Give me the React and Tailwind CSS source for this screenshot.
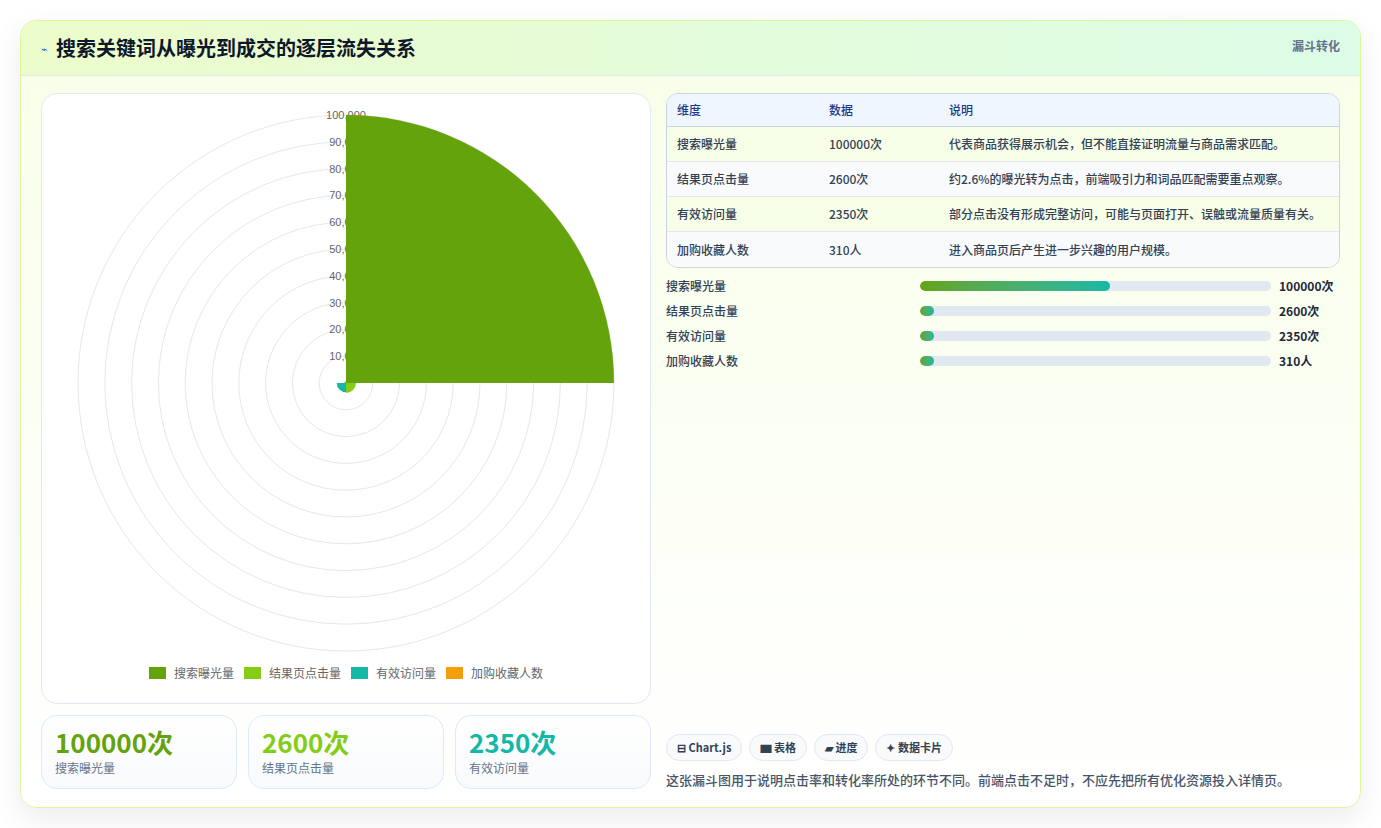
const font = { fontFamily: '"Noto Sans CJK SC", "Noto Sans", sans-serif' };

const rows = [
  { name: '搜索曝光量', value: '100000次', desc: '代表商品获得展示机会，但不能直接证明流量与商品需求匹配。', pct: 54, bg: 'bg-[#f7fee7]' },
  { name: '结果页点击量', value: '2600次', desc: '约2.6%的曝光转为点击，前端吸引力和词品匹配需要重点观察。', pct: 4, bg: 'bg-[#f8fafc]' },
  { name: '有效访问量', value: '2350次', desc: '部分点击没有形成完整访问，可能与页面打开、误触或流量质量有关。', pct: 4, bg: 'bg-[#f7fee7]' },
  { name: '加购收藏人数', value: '310人', desc: '进入商品页后产生进一步兴趣的用户规模。', pct: 4, bg: 'bg-[#f8fafc]' },
];

function wedge(cx, cy, r, a0, a1) {
  const rad = (a) => ((a - 90) * Math.PI) / 180;
  const x0 = cx + r * Math.cos(rad(a0));
  const y0 = cy + r * Math.sin(rad(a0));
  const x1 = cx + r * Math.cos(rad(a1));
  const y1 = cy + r * Math.sin(rad(a1));
  return `M${cx} ${cy} L${x0} ${y0} A${r} ${r} 0 0 1 ${x1} ${y1} Z`;
}

function PolarChart() {
  const cx = 305, cy = 289, R = 268;
  const s = (v) => (v / 100000) * R;
  return (
    <svg width="610" height="560" className="block">
      {[1, 2, 3, 4, 5, 6, 7, 8, 9, 10].map((k) => (
        <circle key={k} cx={cx} cy={cy} r={k * 26.8} fill="none" stroke="#e5e7eb" strokeWidth="1" />
      ))}
      {[1, 2, 3, 4, 5, 6, 7, 8, 9, 10].map((k) => (
        <text key={k} x={cx} y={cy - k * 26.8 + 4} textAnchor="middle" fontSize="11" fill="#666" fontFamily="Liberation Sans, sans-serif">
          {(k * 10000).toLocaleString('en-US')}
        </text>
      ))}
      <path d={wedge(cx, cy, s(100000), 0, 90)} fill="#65a30d" />
      <path d={wedge(cx, cy, s(2600) + 3, 90, 180)} fill="#84cc16" />
      <path d={wedge(cx, cy, s(2350) + 3, 180, 270)} fill="#14b8a6" />
      <path d={wedge(cx, cy, s(310) + 1, 270, 360)} fill="#f59e0b" />
    </svg>
  );
}

export default function App() {
  return (
    <div className="min-h-screen bg-white p-5 text-[#1e293b]" style={font}>
      <div className="rounded-2xl border border-[#d9f99d] shadow-[0_10px_30px_rgba(0,0,0,0.08)] overflow-hidden bg-gradient-to-b from-[#f7fee7] to-white">
        {/* Header */}
        <div className="h-[55px] flex items-center justify-between px-5 bg-gradient-to-r from-[#ecfccb] to-[#dcfce7] border-b border-[#e2e8f0]">
          <div className="flex items-center gap-2">
            <span className="text-[11px] text-[#2563eb]">⌁</span>
            <h1 className="text-[20px] font-bold text-[#0f172a]">搜索关键词从曝光到成交的逐层流失关系</h1>
          </div>
          <span className="self-start mt-4 text-[12px] font-bold text-[#64748b]">漏斗转化</span>
        </div>

        <div className="flex gap-[15px] px-5 pt-[17px] pb-[18px]">
          {/* Left column */}
          <div className="w-[610px] flex flex-col gap-[11px]">
            <div className="h-[611px] bg-white rounded-2xl border border-[#e2e8f0] flex flex-col items-center">
              <PolarChart />
              <div className="flex items-center gap-[10px] text-[12px] text-[#666] mt-[10px]">
                {[['#65a30d', '搜索曝光量'], ['#84cc16', '结果页点击量'], ['#14b8a6', '有效访问量'], ['#f59e0b', '加购收藏人数']].map(([c, t]) => (
                  <div key={t} className="flex items-center gap-[8px]">
                    <span className="w-[17px] h-[12px]" style={{ backgroundColor: c }} />
                    <span>{t}</span>
                  </div>
                ))}
              </div>
            </div>
            <div className="grid grid-cols-3 gap-[11px]">
              {[['100000次', '搜索曝光量', 'text-[#65a30d]'], ['2600次', '结果页点击量', 'text-[#84cc16]'], ['2350次', '有效访问量', 'text-[#14b8a6]']].map(([v, l, c]) => (
                <div key={l} className="h-[74px] rounded-2xl border border-[#dbeafe] bg-gradient-to-b from-white to-[#f8fafc] px-[13px] pt-[9px]">
                  <div className={`text-[26px] font-bold leading-[34px] ${c}`}>{v}</div>
                  <div className="text-[12px] text-[#64748b]">{l}</div>
                </div>
              ))}
            </div>
          </div>

          {/* Right column */}
          <div className="flex-1 flex flex-col">
            <div className="rounded-xl border border-[#cbd5e1] overflow-hidden text-[12px] font-medium">
              <div className="flex h-[33px] items-center bg-[#eff6ff] border-b border-[#cbd5e1] text-[#1e3a8a]">
                <div className="w-[162px] pl-[10px]">维度</div>
                <div className="w-[120px]">数据</div>
                <div className="flex-1">说明</div>
              </div>
              {rows.map((r, i) => (
                <div key={r.name} className={`flex h-[35px] items-center ${r.bg} ${i < 3 ? 'border-b border-[#e2e8f0]' : ''} text-[#334155]`}>
                  <div className="w-[162px] pl-[10px]">{r.name}</div>
                  <div className="w-[120px]">{r.value}</div>
                  <div className="flex-1">{r.desc}</div>
                </div>
              ))}
            </div>
            <div className="mt-[10px] flex flex-col gap-[9px]">
              {rows.map((r) => (
                <div key={r.name} className="flex items-center h-[16px] text-[12px] font-medium">
                  <div className="w-[254px] text-[#334155]">{r.name}</div>
                  <div className="w-[351px] h-[10px] rounded-full bg-[#e2e8f0] overflow-hidden">
                    <div className="h-full rounded-full bg-gradient-to-r from-[#65a30d] to-[#14b8a6]" style={{ width: `${r.pct}%` }} />
                  </div>
                  <div className="pl-[8px] font-bold text-[#1e293b]">{r.value}</div>
                </div>
              ))}
            </div>
            <div className="flex-1" />
            <div className="flex gap-[7px] mb-[9px]">
              {['⊟ Chart.js', '▆ 表格', '▰ 进度', '✦ 数据卡片'].map((t) => (
                <span key={t} className="h-[27px] px-[10px] flex items-center rounded-full border border-[#e2e8f0] bg-[#f8fafc] text-[11px] font-bold text-[#334155]">{t}</span>
              ))}
            </div>
            <p className="text-[13px] text-[#475569] font-medium">这张漏斗图用于说明点击率和转化率所处的环节不同。前端点击不足时，不应先把所有优化资源投入详情页。</p>
          </div>
        </div>
      </div>
    </div>
  );
}
